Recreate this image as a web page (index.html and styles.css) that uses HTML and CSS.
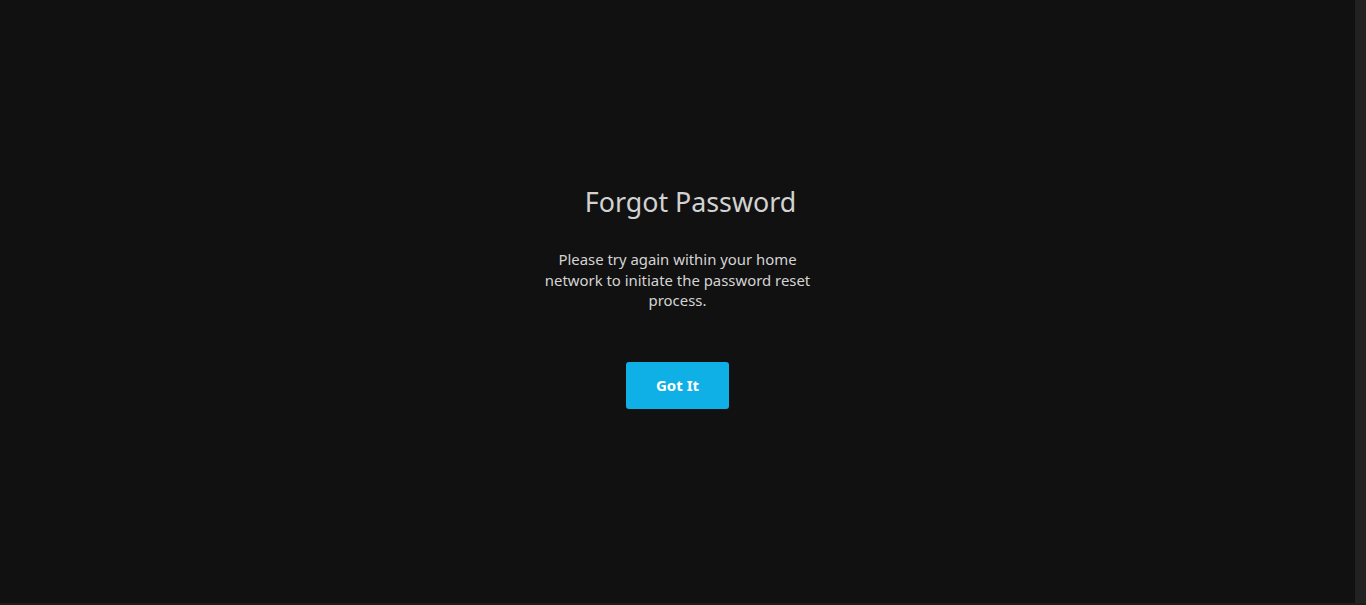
FILE: index.html
```html
<html>
<head>
<meta name="viewport" content="width=device-width, initial-scale=1">
<title>Forgot Password</title>
<link rel="stylesheet" href="styles.css">
</head>
<body>
<div class="page">
	<div class="main">
		<div class="panel">
			<h1 class="title">Forgot Password</h1>
			<p class="message">Please try again within your home network to initiate the password reset process.</p>
			<button class="btn">Got It</button>
		</div>
	</div>
	<div class="scrollbar"></div>
</div>
</body>
</html>
```

FILE: styles.css
```css
html, body {
margin: 0;
height: 100%;
background-color: #111111;
font-family: "Noto Sans", "Open Sans", sans-serif;
}

.page {
display: flex;
height: 603px;
border-bottom: 2px solid #1d1d1d;
}

.main {
flex: 1;
display: flex;
justify-content: center;
}

.scrollbar {
width: 11px;
background-color: #222222;
}

.panel {
width: 270px;
display: flex;
flex-direction: column;
align-items: center;
padding-top: 183px;
}

.title {
margin: 0 0 0 26px;
font-size: 26.8px;
font-weight: normal;
color: #d2d2d2;
white-space: nowrap;
line-height: 38px;
}

.message {
margin: 28px 0 0 0;
font-size: 14.9px;
line-height: 20.5px;
color: #d4d4d4;
text-align: center;
}

.btn {
margin-top: 51px;
width: 103px;
height: 47px;
border: none;
border-radius: 3px;
background-color: #0eb0e6;
color: white;
font-family: "Noto Sans", "Open Sans", sans-serif;
font-size: 15px;
font-weight: bold;
}
```
